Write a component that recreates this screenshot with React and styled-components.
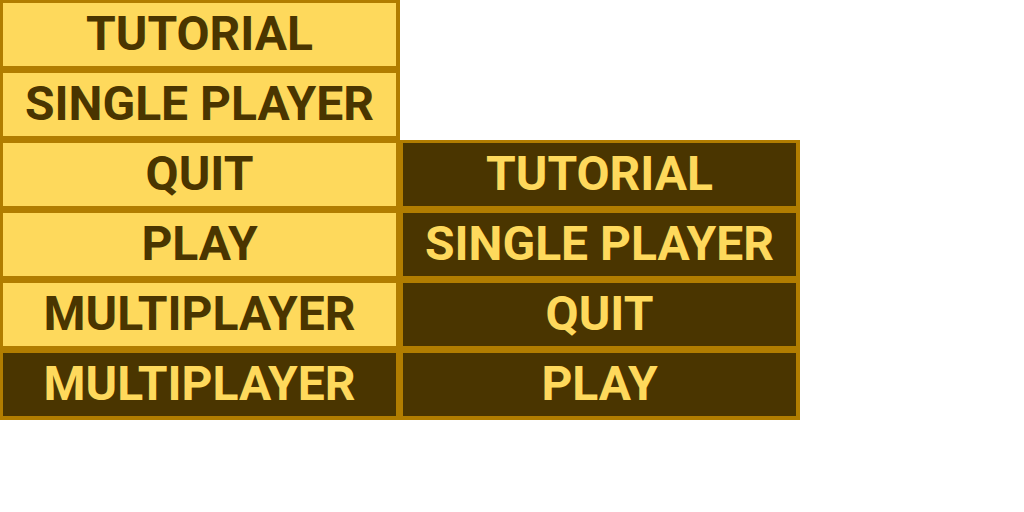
import React from 'react';
import styled, { createGlobalStyle } from 'styled-components';

const GlobalStyle = createGlobalStyle`
  body {
    margin: 0;
    background: #ffffff;
    font-family: Roboto, "Liberation Sans", sans-serif;
  }
`;

const Page = styled.div`
  display: flex;
  align-items: flex-start;
`;

const Column = styled.div`
  display: flex;
  flex-direction: column;
  width: 400px;
  margin-top: ${(p) => p.offset || 0}px;
`;

const MenuButton = styled.button`
  box-sizing: border-box;
  width: 400px;
  height: 70px;
  margin: 0;
  padding: 0 0 2px;
  border-style: solid;
  border-color: #b17d00;
  border-width: 3px 4px 4px 3px;
  background: ${(p) => (p.dark ? '#4a3500' : '#fed95c')};
  color: ${(p) => (p.dark ? '#fed95c' : '#4a3500')};
  font-family: Roboto, "Liberation Sans", sans-serif;
  font-weight: 700;
  font-size: 48px;
  line-height: 1;
  display: flex;
  align-items: center;
  justify-content: center;
  cursor: pointer;
`;

const leftItems = [
  { label: 'TUTORIAL' },
  { label: 'SINGLE PLAYER' },
  { label: 'QUIT' },
  { label: 'PLAY' },
  { label: 'MULTIPLAYER' },
  { label: 'MULTIPLAYER', dark: true },
];

const rightItems = ['TUTORIAL', 'SINGLE PLAYER', 'QUIT', 'PLAY'];

export default function App() {
  return (
    <>
      <GlobalStyle />
      <Page>
        <Column>
          {leftItems.map((item, i) => (
            <MenuButton key={i} dark={item.dark}>
              {item.label}
            </MenuButton>
          ))}
        </Column>
        <Column offset={140}>
          {rightItems.map((label) => (
            <MenuButton key={label} dark>
              {label}
            </MenuButton>
          ))}
        </Column>
      </Page>
    </>
  );
}
